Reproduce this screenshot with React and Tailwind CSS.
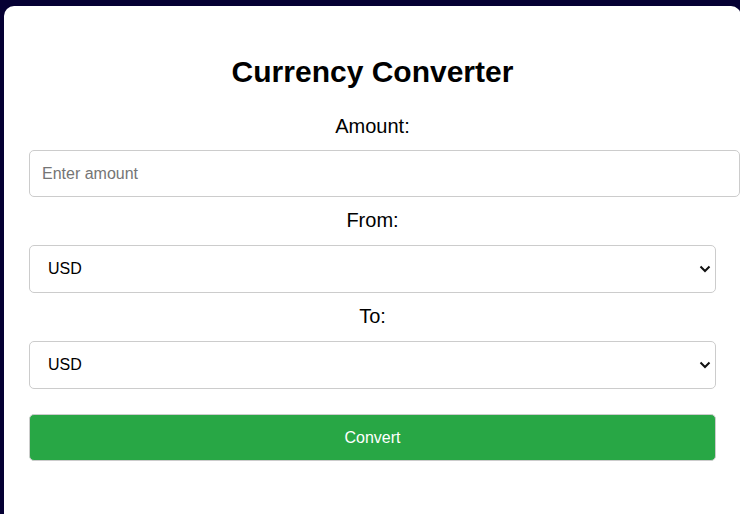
export default function App() {
  const currencies = ['USD', 'EUR', 'GBP', 'INR', 'JPY'];

  return (
    <div className="h-[514px] w-[740px] overflow-hidden bg-[#050033] font-['Liberation_Sans',Arial,sans-serif]">
      {/* Card */}
      <div className="ml-[4px] mt-[6px] h-[520px] w-[737px] rounded-[10px] bg-white px-[25px] pt-[49px]">
        <h2 className="text-center text-[30px] font-bold leading-[34px] text-black">
          Currency Converter
        </h2>

        <label className="mt-[25px] block text-center text-[20px] leading-[24px] text-black">
          Amount:
        </label>
        <input
          type="number"
          placeholder="Enter amount"
          className="mt-[12px] block h-[47px] w-[711px] rounded-[5px] border border-[#ccc] px-[12px] text-[16px] text-black outline-none placeholder:text-[#757575]"
        />

        <label className="mt-[11px] block text-center text-[20px] leading-[24px] text-black">
          From:
        </label>
        <div className="relative mt-[13px]">
          <select className="block h-[48px] w-full appearance-none rounded-[5px] border border-[#ccc] bg-white pl-[18px] text-[16px] text-black outline-none">
            {currencies.map((c) => (
              <option key={c}>{c}</option>
            ))}
          </select>
          <svg
            className="pointer-events-none absolute right-[5px] top-[20px]"
            width="12"
            height="8"
            viewBox="0 0 12 8"
          >
            <path d="M1.5 1.5 L6 6 L10.5 1.5" fill="none" stroke="#111" strokeWidth="2" />
          </svg>
        </div>

        <label className="mt-[11px] block text-center text-[20px] leading-[24px] text-black">
          To:
        </label>
        <div className="relative mt-[13px]">
          <select className="block h-[48px] w-full appearance-none rounded-[5px] border border-[#ccc] bg-white pl-[18px] text-[16px] text-black outline-none">
            {currencies.map((c) => (
              <option key={c}>{c}</option>
            ))}
          </select>
          <svg
            className="pointer-events-none absolute right-[5px] top-[20px]"
            width="12"
            height="8"
            viewBox="0 0 12 8"
          >
            <path d="M1.5 1.5 L6 6 L10.5 1.5" fill="none" stroke="#111" strokeWidth="2" />
          </svg>
        </div>

        <button className="mt-[25px] block h-[47px] w-full rounded-[5px] border border-[#ccc] bg-[#28a745] text-[16px] text-white">
          Convert
        </button>
      </div>
    </div>
  );
}
